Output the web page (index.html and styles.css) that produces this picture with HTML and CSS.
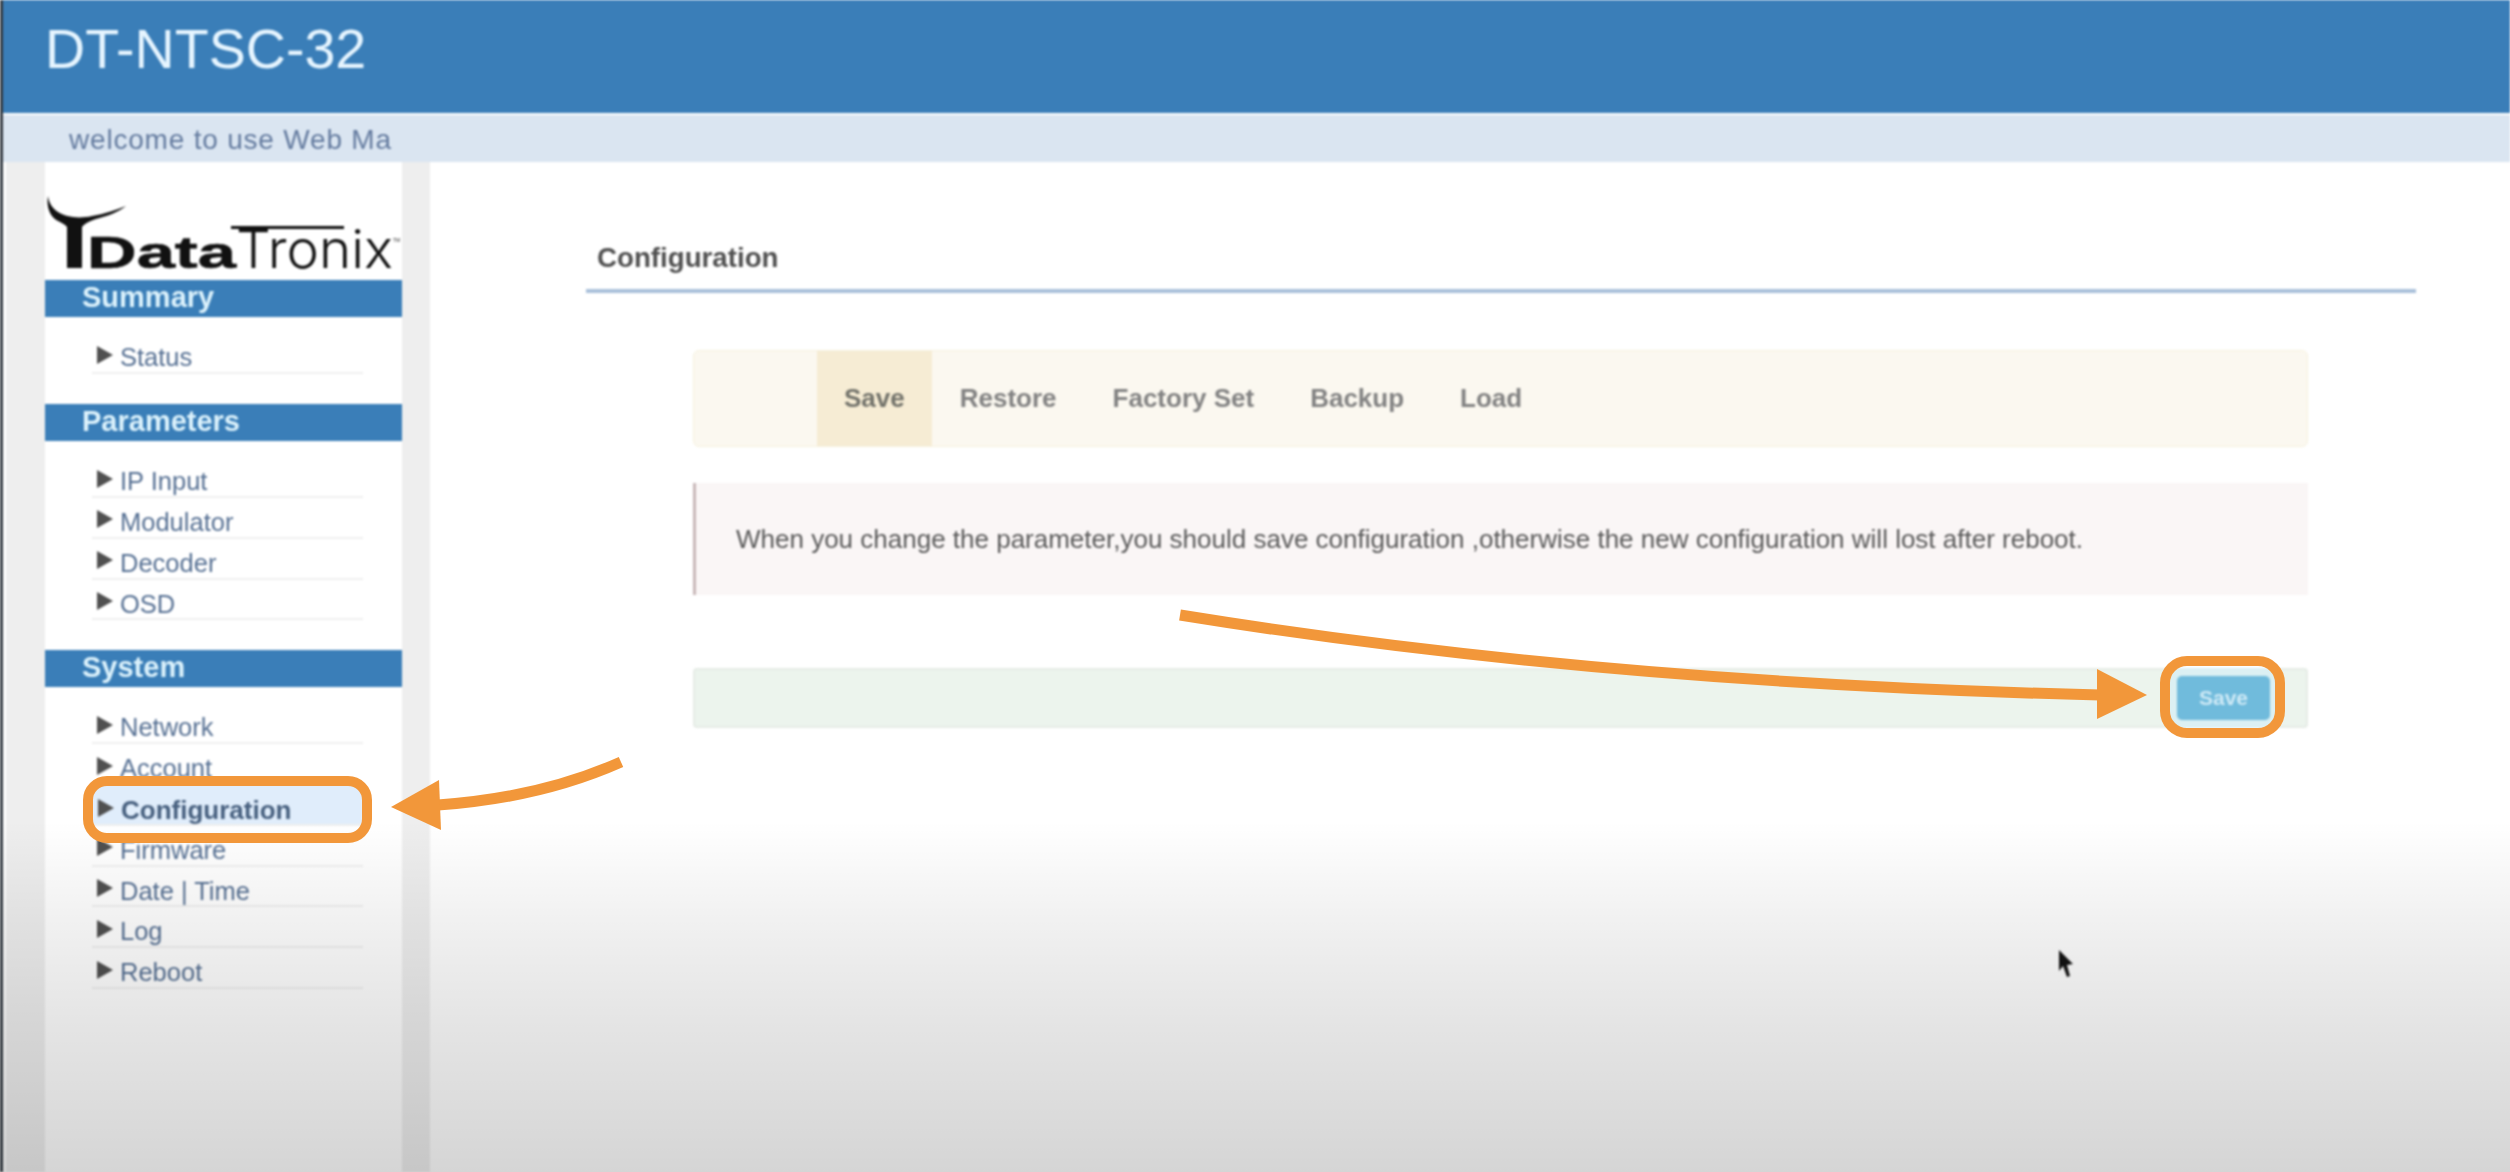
FILE: index.html
```html
<!DOCTYPE html>
<html lang="en">
<head>
<meta charset="utf-8">
<title>DT-NTSC-32</title>
<link rel="stylesheet" href="styles.css">
</head>
<body>
<div class="page">
  <header class="topbar"><h1 class="product">DT-NTSC-32</h1></header>
  <div class="welcome"><span class="welcome-text">welcome to use Web Ma</span></div>
  <div class="main">
    <aside class="sidebar">
      <svg class="logo" viewBox="45 162 357 118" aria-label="DataTronix logo">
        <path class="logo-mark" d="M48 196C46 207 50 218 60 222C63 224 66 225 67 227L67 268L82 268L82 227C84 224 88 222 96 219C108 216 118 212 126 206C116 210 104 214 92 216C78 219 66 217 58 212C52 208 49 203 48 196Z"/>
        <text class="logo-bold" x="87" y="268" textLength="149" lengthAdjust="spacingAndGlyphs">Data</text>
        <rect class="logo-fill" x="231" y="226" width="113" height="3"/>
        <text class="logo-thin" x="236" y="268" textLength="157" lengthAdjust="spacingAndGlyphs">Tronix</text>
        <text class="logo-tm" x="393" y="242">TM</text>
      </svg>
      <h2 class="section">Summary</h2>
      <ul class="menu">
        <li class="item"><span class="tri"></span>Status</li>
      </ul>
      <h2 class="section">Parameters</h2>
      <ul class="menu">
        <li class="item"><span class="tri"></span>IP Input</li>
        <li class="item"><span class="tri"></span>Modulator</li>
        <li class="item"><span class="tri"></span>Decoder</li>
        <li class="item"><span class="tri"></span>OSD</li>
      </ul>
      <h2 class="section">System</h2>
      <ul class="menu">
        <li class="item"><span class="tri"></span>Network</li>
        <li class="item"><span class="tri"></span>Account</li>
        <li class="item active"><span class="tri"></span>Configuration</li>
        <li class="item"><span class="tri"></span>Firmware</li>
        <li class="item"><span class="tri"></span>Date | Time</li>
        <li class="item"><span class="tri"></span>Log</li>
        <li class="item"><span class="tri"></span>Reboot</li>
      </ul>
    </aside>
    <main class="content">
      <div class="title">Configuration</div>
      <div class="panels">
        <nav class="tabs">
          <span class="tab current">Save</span>
          <span class="tab">Restore</span>
          <span class="tab">Factory Set</span>
          <span class="tab">Backup</span>
          <span class="tab">Load</span>
        </nav>
        <div class="alert">When you change the parameter,you should save configuration ,otherwise the new configuration will lost after reboot.</div>
        <div class="actions"><button class="save" type="button">Save</button></div>
      </div>
    </main>
  </div>
</div>
<div class="fade"></div>
<svg class="notes" viewBox="0 0 2510 1172">
  <rect class="ring" x="88" y="781" width="279" height="57" rx="19"/>
  <path class="tail" d="M621 762Q540 798 438 805"/>
  <polygon class="head" points="391,807 439,780 441,830"/>
  <rect class="ring" x="2165" y="661" width="115" height="72" rx="22"/>
  <path class="tail" d="M1180 615Q1600 683 2100 695"/>
  <polygon class="head" points="2147,695 2097,669 2097,719"/>
  <path class="cursor" d="M2059 950L2059 971L2063 966L2067 977L2070 976L2067 965L2073 964Z"/>
</svg>
</body>
</html>
```

FILE: styles.css
```css
html, body {
  margin: 0;
  padding: 0;
}
body {
  position: relative;
  width: 2510px;
  height: 1172px;
  overflow: hidden;
  background: #fff;
  font-family: "Liberation Sans", Arial, sans-serif;
}
.page {
  display: flex;
  flex-direction: column;
  height: 1172px;
  border-left: 3px solid #333a42;
  box-sizing: border-box;
  filter: blur(0.8px);
}
.topbar {
  height: 113px;
  background: #3a7eb8;
  flex: none;
  padding-left: 42px;
}
.product {
  margin: 0;
  font-size: 55.6px;
  font-weight: 400;
  line-height: 98px;
  color: #e6f5ff;
}
.welcome {
  flex: none;
  height: 47px;
  margin-top: 2px;
  background: #dae5f1;
  padding-left: 66px;
  font-size: 28px;
  line-height: 50px;
  letter-spacing: 0.8px;
  color: #647b9f;
}
.main {
  flex: 1;
  display: flex;
  min-height: 0;
}
.sidebar {
  flex: none;
  width: 357px;
  margin-left: 42px;
  background: #fff;
  box-shadow: 28px 0 0 #eeeeee;
  position: relative;
  display: flex;
  flex-direction: column;
}
.main::before {
  content: "";
  position: absolute;
  left: 3px;
  width: 42px;
  top: 162px;
  bottom: 0;
  background: #eeeeee;
}
.logo {
  display: block;
  width: 357px;
  height: 118px;
  flex: none;
}
.logo-mark,
.logo-fill {
  fill: #111;
}
.logo-bold {
  font-family: "Liberation Sans", sans-serif;
  font-weight: 700;
  font-size: 44px;
  fill: #111;
  stroke: #111;
  stroke-width: 0.6;
}
.logo-thin {
  font-family: Inter, "Liberation Sans", sans-serif;
  font-weight: 300;
  font-size: 53px;
  fill: #111;
}
.logo-tm {
  font-family: "Liberation Sans", sans-serif;
  font-size: 5px;
  fill: #333;
}
.section {
  margin: 0;
  flex: none;
  height: 37px;
  background: #3a7eb8;
  padding-left: 37px;
  font-size: 29px;
  font-weight: 700;
  line-height: 34px;
  color: #dcf2fc;
}
.menu {
  list-style: none;
  margin: 16.5px 39px 29.5px 47px;
  padding: 0;
}
.item {
  display: flex;
  align-items: center;
  height: 40.8px;
  box-sizing: border-box;
  padding: 10px 0 0 5px;
  border-bottom: 2px solid #efefef;
  font-size: 25.5px;
  color: #567093;
}
.item.active {
  padding: 13px 0 0 6px;
  background: #e0edfb;
  font-size: 26px;
  font-weight: 700;
  color: #47607f;
}
.tri {
  flex: none;
  width: 0;
  height: 0;
  margin: -6px 7px 0 0;
  border-left: 16px solid #505050;
  border-top: 9px solid transparent;
  border-bottom: 9px solid transparent;
}
.content {
  flex: 1;
  margin-left: 28px;
  min-width: 0;
}
.title {
  margin: 0 94px 0 156px;
  height: 131px;
  box-sizing: border-box;
  padding: 78px 0 0 11px;
  border-bottom: 4px solid #a9c0da;
  font-size: 27.7px;
  line-height: 36px;
  font-weight: 700;
  color: #505050;
}
.panels {
  margin: 57px 202px 0 263px;
  display: flex;
  flex-direction: column;
}
.tabs {
  display: flex;
  height: 97px;
  box-sizing: border-box;
  padding-left: 123px;
  background: #fbf8f0;
  border: 1px solid #f6f1de;
  border-radius: 6px;
}
.tab {
  padding: 0 28px;
  font-size: 26px;
  line-height: 95px;
  font-weight: 700;
  color: #828282;
}
.tab.current {
  padding: 0 27px;
  background: #f6ecd4;
  color: #73736b;
}
.alert {
  margin-top: 36px;
  height: 112px;
  box-sizing: border-box;
  padding-left: 40px;
  background: #faf6f6;
  border-left: 3px solid #c9b8b9;
  font-size: 26px;
  line-height: 112px;
  color: #5a5a5a;
  white-space: nowrap;
}
.actions {
  margin-top: 73px;
  height: 60px;
  box-sizing: border-box;
  display: flex;
  justify-content: flex-end;
  align-items: center;
  padding-right: 36px;
  background: #ecf4ed;
  border: 2px solid #e6ece6;
  border-radius: 4px;
}
.save {
  width: 93px;
  height: 44px;
  padding: 0;
  border: 0;
  border-radius: 5px;
  background: #70bbdc;
  box-shadow: 0 0 0 8px #dcf0f3;
  font-family: inherit;
  font-size: 21px;
  font-weight: 700;
  color: #cfeaf6;
}
.fade {
  position: absolute;
  left: 0;
  right: 0;
  top: 820px;
  bottom: 0;
  background: linear-gradient(to bottom, rgba(0,0,0,0), rgba(0,0,0,0.06) 30%, rgba(0,0,0,0.105) 59%, rgba(0,0,0,0.165));
  pointer-events: none;
}
.notes {
  position: absolute;
  left: 0;
  top: 0;
  width: 2510px;
  height: 1172px;
  pointer-events: none;
}
.ring {
  fill: none;
  stroke: #f2973a;
  stroke-width: 10;
}
.tail {
  fill: none;
  stroke: #f2973a;
  stroke-width: 11;
}
.head {
  fill: #f2973a;
}
.cursor {
  fill: #111;
  filter: blur(0.8px);
}
```
